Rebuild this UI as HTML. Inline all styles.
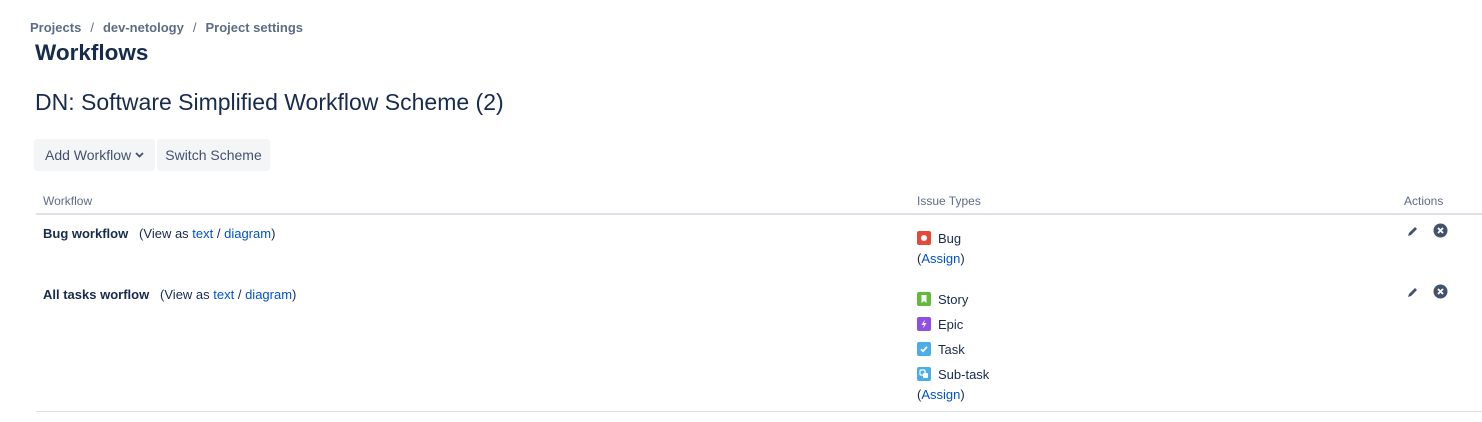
<!DOCTYPE html>
<html><head><meta charset="utf-8"><style>
body{margin:0;width:1482px;height:422px;background:#fff;font-family:"Liberation Sans",sans-serif;color:#172b4d;position:relative;overflow:hidden}
.a{position:absolute;white-space:nowrap}
.bc{font-size:13px;color:#5e6c84;font-weight:bold;top:20px;left:30px}
.bc span{margin:0 9px;font-weight:normal}
.h1{top:40px;left:35px;font-size:22.5px;font-weight:bold}
.h2{top:89px;left:35px;font-size:23px}
.btn{top:139px;height:32px;background:#f4f5f7;border-radius:3px;font-size:14px;color:#42526e;line-height:32px;text-align:center}
.th{top:194px;font-size:12px;color:#5e6c84}
.line{position:absolute;left:36px;right:0;height:2px;background:#dfe1e6}
.t{font-size:13px;color:#172b4d}
b{font-weight:bold}
a{color:#0052cc;text-decoration:none}
.ic{display:inline-block;width:14px;height:14px;vertical-align:-2px;margin-right:7px}
.it{left:917px;font-size:13px}
</style></head><body>
<div class="a bc">Projects<span>/</span>dev-netology<span>/</span>Project settings</div>
<div class="a h1">Workflows</div>
<div class="a h2">DN: Software Simplified Workflow Scheme (2)</div>
<div class="a btn" style="left:34px;width:121px">Add Workflow <svg width="9" height="6" viewBox="0 0 9 6" style="vertical-align:2px"><path d="M1 1l3.5 3.5L8 1" stroke="#42526e" stroke-width="1.8" fill="none"/></svg></div>
<div class="a btn" style="left:157px;width:113px">Switch Scheme</div>
<div class="a th" style="left:43px">Workflow</div>
<div class="a th" style="left:917px">Issue Types</div>
<div class="a th" style="left:1404px">Actions</div>
<div class="line" style="top:213px"></div>
<div class="a t" style="left:43px;top:226px"><b>Bug workflow</b> &nbsp; (View as <a>text</a> / <a>diagram</a>)</div>
<div class="a t" style="left:43px;top:287px"><b>All tasks worflow</b> &nbsp; (View as <a>text</a> / <a>diagram</a>)</div>
<div class="a it" style="top:231px"><svg class="ic" viewBox="0 0 14 14"><rect width="14" height="14" rx="2" fill="#e5493a"/><circle cx="7" cy="7" r="3" fill="#fff"/></svg>Bug</div>
<div class="a it" style="top:251px">(<a>Assign</a>)</div>
<div class="a it" style="top:292px"><svg class="ic" viewBox="0 0 14 14"><rect width="14" height="14" rx="2" fill="#63ba3c"/><path d="M4.5 3h5v8L7 9l-2.5 2z" fill="#fff"/></svg>Story</div>
<div class="a it" style="top:317px"><svg class="ic" viewBox="0 0 14 14"><rect width="14" height="14" rx="2" fill="#904ee2"/><path d="M8 2.5L4.5 8H7l-1 3.5L9.5 6H7z" fill="#fff"/></svg>Epic</div>
<div class="a it" style="top:342px"><svg class="ic" viewBox="0 0 14 14"><rect width="14" height="14" rx="2" fill="#4bade8"/><path d="M4 7.2l2 2 4-4.4" stroke="#fff" stroke-width="1.8" fill="none"/></svg>Task</div>
<div class="a it" style="top:367px"><svg class="ic" viewBox="0 0 14 14"><rect width="14" height="14" rx="2" fill="#4bade8"/><rect x="3" y="3" width="5" height="5" rx="1" fill="none" stroke="#fff" stroke-width="1.2"/><rect x="6" y="6" width="5" height="5" rx="1" fill="#fff"/></svg>Sub-task</div>
<div class="a it" style="top:387px">(<a>Assign</a>)</div>
<svg class="a" style="left:1406px;top:224px" width="14" height="14" viewBox="0 0 14 14"><path d="M2 12l1-3 6-6 2 2-6 6z" fill="#42526e"/></svg>
<svg class="a" style="left:1433px;top:223px" width="15" height="15" viewBox="0 0 15 15"><circle cx="7.5" cy="7.5" r="7" fill="#42526e"/><path d="M5 5l5 5M10 5l-5 5" stroke="#fff" stroke-width="1.8"/></svg>
<svg class="a" style="left:1406px;top:285px" width="14" height="14" viewBox="0 0 14 14"><path d="M2 12l1-3 6-6 2 2-6 6z" fill="#42526e"/></svg>
<svg class="a" style="left:1433px;top:284px" width="15" height="15" viewBox="0 0 15 15"><circle cx="7.5" cy="7.5" r="7" fill="#42526e"/><path d="M5 5l5 5M10 5l-5 5" stroke="#fff" stroke-width="1.8"/></svg>
<div class="line" style="top:411px;height:1px"></div>
</body></html>
